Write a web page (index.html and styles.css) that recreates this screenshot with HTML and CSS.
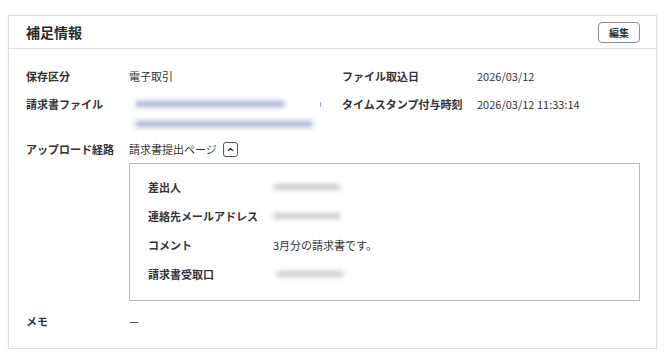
FILE: index.html
```html
<!DOCTYPE html>
<html lang="ja">
<head>
    <meta charset="UTF-8">
    <meta name="viewport" content="width=device-width, initial-scale=1.0">
    <title>補足情報</title>
    <link rel="stylesheet" href="styles.css">
</head>
<body>
    <section class="card">
        <header class="card-header">
            <h2>補足情報</h2>
            <button type="button" class="edit-btn">編集</button>
        </header>

        <div class="card-body">
            <dl class="info-grid">
                <dt>保存区分</dt>
                <dd>電子取引</dd>
                <dt>ファイル取込日</dt>
                <dd>2026/03/12</dd>

                <dt>請求書ファイル</dt>
                <dd class="files">
                    <span class="file-line">
                        <span class="blur blur-blue w1"></span>
                        <span class="dot-mark"></span>
                    </span>
                    <span class="file-line">
                        <span class="blur blur-blue w2"></span>
                    </span>
                </dd>
                <dt>タイムスタンプ付与時刻</dt>
                <dd>2026/03/12 11:33:14</dd>

                <dt>アップロード経路</dt>
                <dd class="wide">
                    <div class="route">
                        請求書提出ページ
                        <button type="button" class="toggle-btn" aria-label="閉じる">
                            <svg width="9" height="9" viewBox="0 0 10 10"><path d="M2.5 6.2 L5 3.7 L7.5 6.2" fill="none" stroke="#333" stroke-width="1.4" stroke-linecap="round" stroke-linejoin="round"/></svg>
                        </button>
                    </div>
                    <dl class="sender-box">
                        <dt>差出人</dt>
                        <dd><span class="blur blur-gray"></span></dd>
                        <dt>連絡先メールアドレス</dt>
                        <dd><span class="blur blur-gray"></span></dd>
                        <dt>コメント</dt>
                        <dd>3月分の請求書です。</dd>
                        <dt>請求書受取口</dt>
                        <dd><span class="blur blur-gray shift"></span></dd>
                    </dl>
                </dd>

                <dt>メモ</dt>
                <dd class="wide">—</dd>
            </dl>
        </div>
    </section>
</body>
</html>
```

FILE: styles.css
```css
:root {
  --text-color: #333333;
  --card-border: #dcdcdc;
  --box-border: #b9b9b9;
}

body {
  font-family: "Noto Sans CJK JP", "Noto Sans", sans-serif;
  color: var(--text-color);
  background-color: #ffffff;
  margin: 0;
  padding: 15px 9px 0 8px;
  font-size: 11px;
}

.card {
  border: 1px solid var(--card-border);
  box-shadow: 0 1px 2px rgba(0, 0, 0, 0.08);
  background-color: white;
}

.card-header {
  display: flex;
  align-items: center;
  justify-content: space-between;
  height: 32px;
  padding: 0 16px 0 17px;
  border-bottom: 1px solid #e2e2e2;
}

.card-header h2 {
  margin: 0;
  font-size: 14px;
  font-weight: 700;
  color: #2b2b2b;
}

.edit-btn {
  font-family: inherit;
  font-size: 10px;
  font-weight: 700;
  color: #333;
  background: white;
  border: 1px solid #8e8e8e;
  border-radius: 4px;
  width: 42px;
  height: 21px;
  padding: 0;
  cursor: pointer;
}

.card-body {
  padding: 17px 16px 17px 17px;
}

.info-grid {
  display: grid;
  grid-template-columns: 103px 213px 135px 1fr;
  row-gap: 8px;
  margin: 0;
  line-height: 20px;
}

.info-grid dt {
  font-weight: 700;
}

.info-grid dd {
  margin: 0;
}

.info-grid .wide {
  grid-column: 2 / 5;
}

.info-grid .files {
  display: flex;
  flex-direction: column;
  margin-bottom: -3px;
}

.file-line {
  display: flex;
  align-items: center;
  height: 20px;
}

.blur {
  display: inline-block;
  height: 6px;
  border-radius: 3px;
}

.blur-blue {
  background-color: #a7b1d3;
  filter: blur(2.5px);
  margin-left: 6px;
}

.blur-blue.w1 {
  width: 150px;
}

.blur-blue.w2 {
  width: 178px;
}

.dot-mark {
  display: inline-block;
  width: 1px;
  height: 5px;
  margin-left: 35px;
  background-color: #8fa6d6;
}

.route {
  display: flex;
  align-items: center;
  gap: 6px;
}

.toggle-btn {
  display: flex;
  align-items: center;
  justify-content: center;
  width: 15px;
  height: 15px;
  padding: 0;
  background: white;
  border: 1px solid #555;
  border-radius: 3px;
}

.sender-box {
  display: grid;
  grid-template-columns: 125px 1fr;
  row-gap: 9px;
  margin: 4px 0 2px;
  padding: 13px 18px 16px;
  border: 1px solid var(--box-border);
}

.sender-box dd {
  display: flex;
  align-items: center;
}

.blur-gray {
  width: 68px;
  height: 6px;
  background-color: #cbcbcb;
  filter: blur(2.5px);
}

.blur-gray.shift {
  margin-left: 3px;
}
```
